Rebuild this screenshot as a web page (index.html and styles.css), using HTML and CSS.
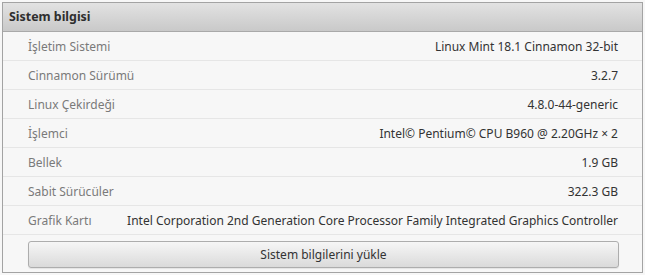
FILE: index.html
```html
<!DOCTYPE html>
<html lang="tr">
  <head>
    <meta charset="UTF-8" />
    <meta name="viewport" content="width=device-width, initial-scale=1.0" />
    <title>Sistem bilgisi</title>
    <link rel="stylesheet" href="styles.css">
  </head>
  <body>
    <div class="info-panel">
      <div class="info-header">Sistem bilgisi</div>
      <div class="info-list">
        <div class="info-row">
          <span class="info-label">İşletim Sistemi</span>
          <span class="info-value">Linux Mint 18.1 Cinnamon 32-bit</span>
        </div>
        <div class="info-row">
          <span class="info-label">Cinnamon Sürümü</span>
          <span class="info-value">3.2.7</span>
        </div>
        <div class="info-row">
          <span class="info-label">Linux Çekirdeği</span>
          <span class="info-value">4.8.0-44-generic</span>
        </div>
        <div class="info-row">
          <span class="info-label">İşlemci</span>
          <span class="info-value">Intel© Pentium© CPU B960 @ 2.20GHz × 2</span>
        </div>
        <div class="info-row">
          <span class="info-label">Bellek</span>
          <span class="info-value">1.9 GB</span>
        </div>
        <div class="info-row">
          <span class="info-label">Sabit Sürücüler</span>
          <span class="info-value">322.3 GB</span>
        </div>
        <div class="info-row">
          <span class="info-label">Grafik Kartı</span>
          <span class="info-value">Intel Corporation 2nd Generation Core Processor Family Integrated Graphics Controller</span>
        </div>
      </div>
      <div class="info-actions">
        <button type="button" class="upload-button">Sistem bilgilerini yükle</button>
      </div>
    </div>
  </body>
</html>
```

FILE: styles.css
```css
body {
  font-family: "Noto Sans", "DejaVu Sans", sans-serif;
  font-size: 12px;
  background-color: #f7f7f7;
  margin: 0;
  padding: 2px;
}
.info-panel {
  width: 641px;
  height: 271px;
  box-sizing: border-box;
  border: 1px solid #a3a3a3;
  background-color: #f7f7f7;
}
.info-header {
  height: 28px;
  line-height: 28px;
  padding-left: 6px;
  font-size: 12.4px;
  font-weight: bold;
  color: #2e2e2e;
  background: linear-gradient(#e2e2e2, #c9c9c9);
  border-bottom: 1px solid #a9a9a9;
}
.info-row {
  display: flex;
  justify-content: space-between;
  align-items: center;
  gap: 12px;
  height: 28px;
  padding: 0 24px 0 25px;
  border-bottom: 1px solid #e6e6e6;
  white-space: nowrap;
}
.info-label {
  color: #7a7a7a;
}
.info-value {
  color: #333;
}
.info-actions {
  padding: 6px 23px 0 25px;
}
.upload-button {
  width: 100%;
  height: 27px;
  font-family: inherit;
  font-size: 12px;
  color: #333;
  border: 1px solid #adadad;
  border-radius: 3px;
  background: linear-gradient(#f6f6f6, #dadada);
  box-shadow: 0 1px 1px rgba(0, 0, 0, 0.08);
  cursor: pointer;
}
```
